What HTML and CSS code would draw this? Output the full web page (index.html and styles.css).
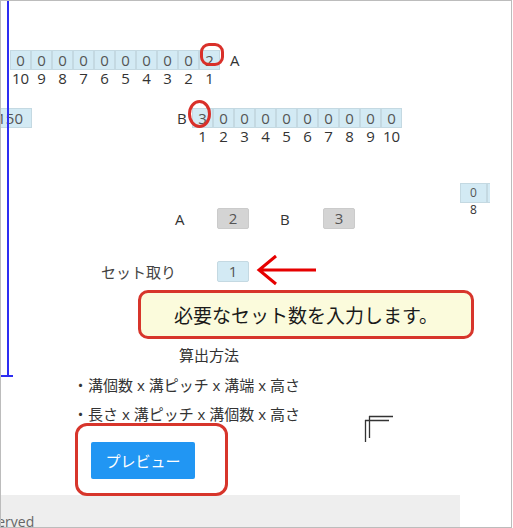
FILE: index.html
```html
<!DOCTYPE html>
<html lang="ja">
<head>
<meta charset="utf-8">
<link rel="stylesheet" href="styles.css">
</head>
<body>
<div class="frame">
  <div class="vline"></div>
  <div class="vtick"></div>

  <div class="digits digits-a">
    <span class="cell">0</span><span class="cell">0</span><span class="cell">0</span><span class="cell">0</span><span class="cell">0</span><span class="cell">0</span><span class="cell">0</span><span class="cell">0</span><span class="cell">0</span><span class="cell">2</span>
    <span class="tag tag-a">A</span>
    <span class="num">10</span><span class="num">9</span><span class="num">8</span><span class="num">7</span><span class="num">6</span><span class="num">5</span><span class="num">4</span><span class="num">3</span><span class="num">2</span><span class="num">1</span>
  </div>

  <div class="row-b">
    <span class="cell b150">150</span>
    <div class="digits digits-b">
      <span class="tag">B</span>
      <span class="cell">3</span><span class="cell">0</span><span class="cell">0</span><span class="cell">0</span><span class="cell">0</span><span class="cell">0</span><span class="cell">0</span><span class="cell">0</span><span class="cell">0</span><span class="cell">0</span>
      <span class="num first">1</span><span class="num">2</span><span class="num">3</span><span class="num">4</span><span class="num">5</span><span class="num">6</span><span class="num">7</span><span class="num">8</span><span class="num">9</span><span class="num">10</span>
    </div>
  </div>

  <div class="row-ab">
    <div class="ab">
      <span class="ab-l">A</span>
      <span class="gbox">2</span>
      <span class="ab-l ab-l2">B</span>
      <span class="gbox">3</span>
    </div>
    <div class="mini">
      <div class="mini-row"><span class="mcell">0</span><span class="mcell">0</span></div>
      <div class="mini-lab">8</div>
    </div>
  </div>

  <div class="row-set">
    <span class="set-l">セット取り</span>
    <span class="bbox">1</span>
  </div>

  <div class="calc">算出方法</div>
  <div class="li li1">・溝個数 x 溝ピッチ x 溝端 x 高さ</div>
  <div class="li li2">・長さ x 溝ピッチ x 溝個数 x 高さ</div>

  <button class="preview" type="button">プレビュー</button>

  <div class="footer"><span class="foot-text">reserved</span></div>

  <!-- overlays -->
  <div class="mark mark-a"></div>
  <div class="mark mark-b"></div>
  <svg class="arrow" width="64" height="34" viewBox="0 0 64 34">
    <path d="M4 17 H61 M21 3 L4 17 L21 31" fill="none" stroke="#e60000" stroke-width="3" stroke-linejoin="miter"/>
  </svg>
  <div class="callout">必要なセット数を入力します。</div>
  <div class="ring"></div>
  <svg class="bracket" width="34" height="32" viewBox="0 0 34 32">
    <path d="M6 2.5 H30 M2 6.5 H26 M2.5 6 V28 M6.5 2 V24" fill="none" stroke="#333" stroke-width="1.3"/>
  </svg>
</div>
</body>
</html>
```

FILE: styles.css
```css
html, body {
  margin: 0;
  padding: 0;
  background: #fff;
}

.frame {
  position: relative;
  width: 512px;
  height: 528px;
  box-sizing: border-box;
  border: 1px solid #bcbcbc;
  overflow: hidden;
  font-family: "Open Sans", "Noto Sans CJK JP", sans-serif;
  color: #333;
}

.vline {
  position: absolute;
  left: 6px;
  top: 0;
  width: 2px;
  height: 376px;
  background: #2d2df2;
}

.vtick {
  position: absolute;
  left: -1px;
  top: 374px;
  width: 13px;
  height: 2px;
  background: #2d2df2;
}

.digits {
  display: grid;
  grid-template-rows: 20px 16px;
  font-size: 15px;
}

.digits-a {
  margin: 49px 0 0 9px;
  grid-template-columns: repeat(10, 21px) auto;
}

.cell {
  display: block;
  height: 20px;
  box-sizing: border-box;
  border: 1px solid #c4d9e2;
  background: #d3eaf4;
  text-align: center;
  line-height: 18px;
  font-size: 15px;
  color: #555;
}

.num {
  text-align: center;
  line-height: 16px;
  color: #333;
}

.num.first {
  grid-column-start: 2;
}

.tag {
  line-height: 20px;
  color: #333;
}

.tag-a {
  padding-left: 10px;
}

.row-b {
  display: flex;
  align-items: flex-start;
  margin-top: 22px;
}

.b150 {
  margin-left: -20px;
  width: 51px;
  text-align: right;
  padding-right: 8px;
}

.digits-b {
  margin-left: 145px;
  grid-template-columns: 15px repeat(10, 21px);
}

.row-ab {
  display: flex;
  align-items: flex-start;
  margin-top: 39px;
}

.ab {
  display: flex;
  align-items: center;
  margin: 25px 0 0 174px;
  font-size: 15px;
}

.ab-l {
  width: 42px;
  color: #333;
}

.ab-l2 {
  width: 43px;
  margin-left: 31px;
}

.gbox {
  width: 32px;
  height: 21px;
  box-sizing: border-box;
  border: 1px solid #cbcbcb;
  border-radius: 2px;
  background: #d4d4d4;
  text-align: center;
  line-height: 19px;
  color: #555;
}

.mini {
  margin-left: 105px;
  width: 30px;
  overflow: hidden;
}

.mini-row {
  display: flex;
  width: 60px;
}

.mcell {
  width: 27px;
  height: 20px;
  box-sizing: border-box;
  border: 1px solid #c4d9e2;
  background: #d3eaf4;
  text-align: center;
  line-height: 18px;
  font-size: 12px;
  color: #555;
}

.mini-lab {
  width: 27px;
  text-align: center;
  font-size: 12px;
  line-height: 14px;
  color: #333;
}

.row-set {
  display: flex;
  align-items: center;
  margin: 32px 0 0 100px;
  font-size: 15px;
}

.set-l {
  width: 116px;
  color: #444;
}

.bbox {
  width: 32px;
  height: 21px;
  box-sizing: border-box;
  border: 1px solid #c4d9e2;
  border-radius: 2px;
  background: #d3eaf4;
  text-align: center;
  line-height: 19px;
  color: #555;
}

.calc {
  margin: 63px 0 0 178px;
  font-size: 15px;
  line-height: 20px;
  color: #333;
}

.li {
  margin-left: 72px;
  font-size: 15px;
  line-height: 20px;
  color: #333;
  white-space: nowrap;
}

.li1 {
  margin-top: 10px;
}

.li2 {
  margin-top: 9px;
}

.preview {
  display: block;
  margin: 18px 0 0 90px;
  width: 104px;
  height: 37px;
  padding: 0;
  border: none;
  border-radius: 2px;
  background: #2196f3;
  color: #fff;
  font-family: "Noto Sans CJK JP", sans-serif;
  font-size: 15px;
  line-height: 37px;
}

.footer {
  margin-top: 16px;
  width: 459px;
  height: 40px;
  box-sizing: border-box;
  padding-top: 17px;
  background: #eeeeee;
  font-size: 14px;
  line-height: 20px;
  color: #666;
  white-space: nowrap;
}

.foot-text {
  display: inline-block;
  margin-left: -24px;
}

/* overlays */
.mark {
  position: absolute;
  box-sizing: border-box;
  border: 3px solid #d9302a;
}

.mark-a {
  left: 199px;
  top: 42px;
  width: 24px;
  height: 23px;
  border-radius: 9px;
}

.mark-b {
  left: 187px;
  top: 99px;
  width: 23px;
  height: 28px;
  border-radius: 50%;
}

.arrow {
  position: absolute;
  left: 254px;
  top: 252px;
}

.callout {
  position: absolute;
  left: 137px;
  top: 289px;
  width: 336px;
  height: 49px;
  box-sizing: border-box;
  border: 3px solid #d7352b;
  border-radius: 10px;
  background: #fbfbdc;
  display: flex;
  align-items: center;
  justify-content: center;
  font-family: "Noto Sans CJK JP", sans-serif;
  font-size: 19px;
  color: #1a1a1a;
}

.ring {
  position: absolute;
  left: 74px;
  top: 422px;
  width: 153px;
  height: 73px;
  box-sizing: border-box;
  border: 3px solid #d7352b;
  border-radius: 12px;
}

.bracket {
  position: absolute;
  left: 362px;
  top: 413px;
}
```
